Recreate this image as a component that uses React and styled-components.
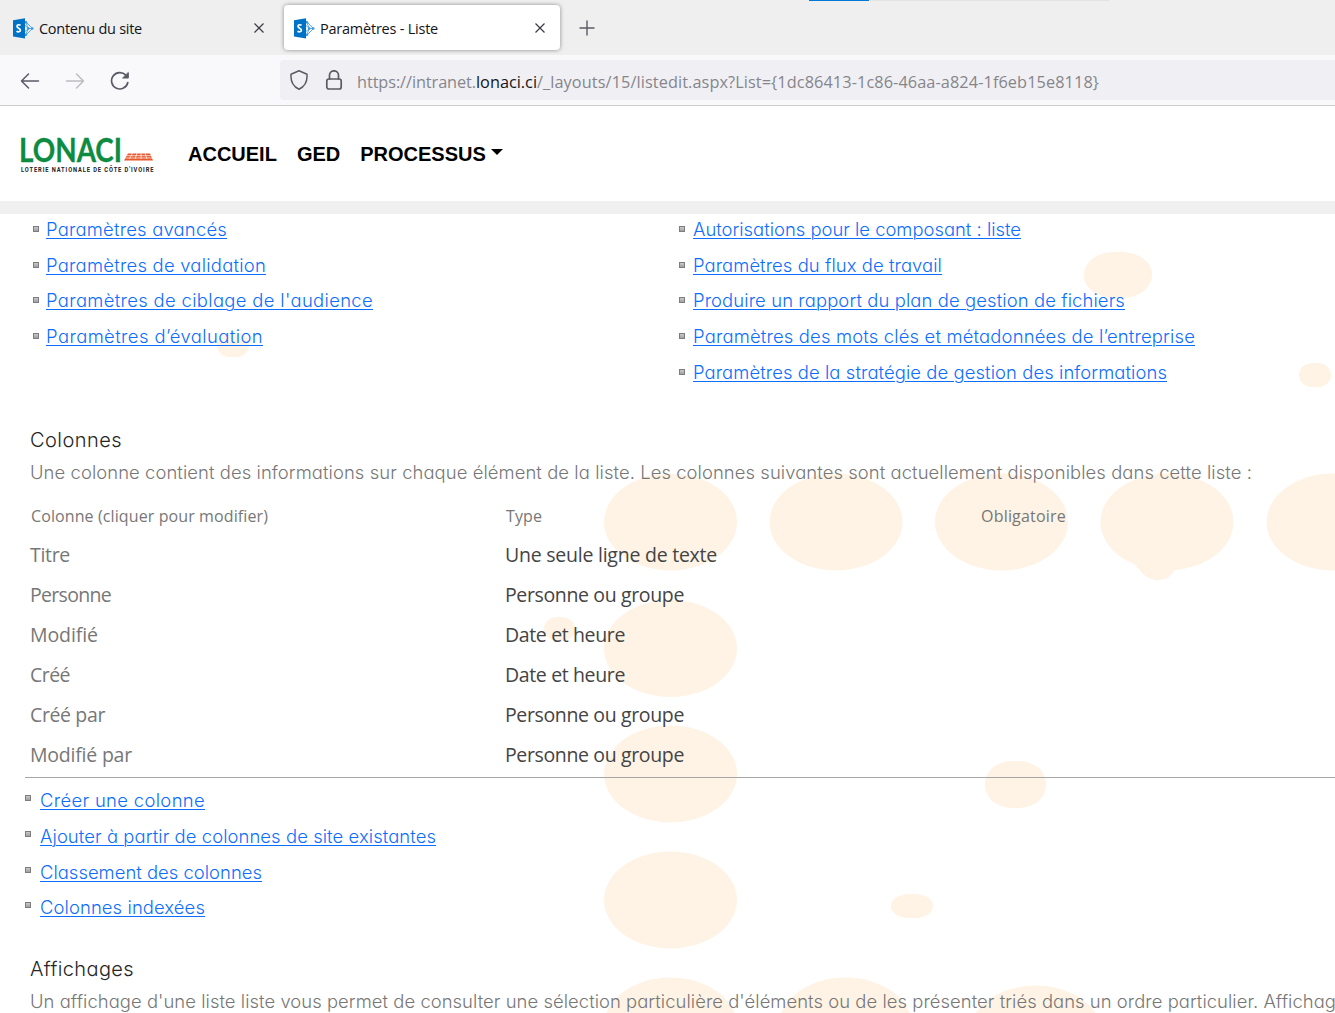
import React, { useLayoutEffect, useRef, useState } from "react";
import styled, { createGlobalStyle } from "styled-components";

const segoe = `"Open Sans", "Noto Sans", sans-serif`;
const gothic = `Inter, "Liberation Sans", sans-serif`;

const GlobalStyle = createGlobalStyle`
  *, *::before, *::after { box-sizing: border-box; }
  html, body { margin: 0; padding: 0; background: #fff; overflow: hidden; }
`;

const Page = styled.div`
  width: 1335px;
  height: 1013px;
  overflow: hidden;
  display: flex;
  flex-direction: column;
  background: #fff;
`;

/* ---------- text fitted to a column width by tracking ---------- */
const FitSpan = styled.span`
  white-space: pre;
  display: inline-block;
`;

function Fit({ w, children }) {
  const ref = useRef(null);
  const [spacing, setSpacing] = useState(0);
  useLayoutEffect(() => {
    const el = ref.current;
    const count = el.textContent.length;
    setSpacing((w - el.getBoundingClientRect().width) / count);
  }, [w]);
  return <FitSpan ref={ref} style={{ letterSpacing: `${spacing}px` }}>{children}</FitSpan>;
}

/* ---------- browser chrome ---------- */
const TabStrip = styled.div`
  position: relative;
  flex: none;
  height: 55px;
  background: #efefef;
  display: flex;
  align-items: center;
`;
const LoadingBar = styled.div`
  position: absolute;
  top: 0;
  left: 809px;
  width: 300px;
  height: 1px;
  background: linear-gradient(to right, #0078d7 60px, #e3e3e3 60px);
`;
const Tab = styled.div`
  width: 276px;
  height: 45px;
  margin-left: ${(p) => (p.$active ? 8 : 0)}px;
  padding: 1px ${(p) => (p.$active ? 15 : 12)}px 0 ${(p) => (p.$active ? 10 : 13)}px;
  border-radius: 4px;
  background: ${(p) => (p.$active ? "#fff" : "transparent")};
  box-shadow: ${(p) => (p.$active ? "0 0 4px rgba(0,0,0,.42)" : "none")};
  display: flex;
  align-items: center;
  font: 14.5px/20px ${segoe};
  color: #15141a;
`;
const TabTitle = styled.div`
  flex: 1;
  margin-left: 5px;
  padding-top: 1px;
`;
const NewTab = styled.div`
  margin-left: 19px;
  display: flex;
`;
const Toolbar = styled.div`
  flex: none;
  height: 51px;
  background: #f9f9fb;
  border-bottom: 1px solid #ccccce;
  display: flex;
  align-items: center;
  padding-left: 20px;
`;
const NavButtons = styled.div`
  width: 260px;
  padding-top: 1px;
  display: flex;
  gap: 25px;
`;
const UrlBar = styled.div`
  flex: 1;
  height: 40px;
  padding-left: 9px;
  background: #f0f0f4;
  border-radius: 4px 0 0 4px;
  display: flex;
  align-items: center;
  font: 16.3px/24px ${segoe};
  color: #86858b;
`;
const UrlIcons = styled.div`
  width: 68px;
  display: flex;
  gap: 15px;
`;
const UrlText = styled.div`
  padding-top: 4px;
`;
const Host = styled.span`
  color: #15141a;
`;

/* ---------- site header ---------- */
const Header = styled.header`
  flex: none;
  height: 108px;
  border-bottom: 13px solid #f0f0f0;
  display: flex;
  align-items: center;
  padding-left: 20px;
`;
const Menu = styled.nav`
  display: flex;
  gap: 20px;
  margin-left: 33px;
  font: bold 20px/24px "Liberation Sans", Arial, sans-serif;
  color: #000;
`;
const MenuItem = styled.div`
  display: flex;
  align-items: center;
`;
const Caret = styled.span`
  margin: -4px 0 0 5px;
  border: 6px solid transparent;
  border-top-color: #000;
  border-bottom: 0;
`;

/* ---------- content ---------- */
const Content = styled.main`
  position: relative;
  flex: 1;
  min-height: 0;
  overflow: hidden;
`;
const Dots = styled.svg`
  position: absolute;
  inset: 0;
  fill: #fef3e4;
`;
const Body = styled.div`
  position: relative;
  width: 1400px;
`;
const Settings = styled.div`
  display: grid;
  grid-template-columns: 646px 1fr;
  padding: 1px 0 0 33px;
  height: 212px;
`;
const LinkList = styled.ul`
  list-style: none;
  margin: 0;
  padding: 0;
  display: flex;
  flex-direction: column;
`;
const LinkItem = styled.li`
  height: 35.7px;
  display: flex;
  align-items: flex-start;
  gap: ${(p) => p.$gap}px;
  &::before {
    content: "";
    flex: none;
    width: 6px;
    height: 6px;
    margin-top: ${(p) => p.$bullet}px;
    border: 1px solid #7d7d7d;
    background: linear-gradient(#c9c9c9, #a0a0a0);
  }
`;
const Link = styled.a`
  font: 300 18.4px/28px ${gothic};
  font-feature-settings: "cv11", "calt" 0;
  color: #0d6efd;
  & > span {
    text-decoration: underline;
    text-decoration-thickness: 1px;
    text-underline-offset: 2px;
  }
`;
const Heading = styled.h3`
  margin: 0 0 0 30px;
  height: 32px;
  font: 300 20px/28px ${gothic};
  font-feature-settings: "cv11", "calt" 0;
  color: #262626;
`;
const Description = styled.p`
  margin: 0 0 0 30px;
  height: 30px;
  font: 300 18.4px/28px ${gothic};
  font-feature-settings: "cv11", "calt" 0;
  color: #777;
  white-space: nowrap;
`;
const Table = styled.div`
  margin: 11px 0 0 25px;
  height: 279px;
  border-bottom: 1px solid #a6a6a6;
`;
const Row = styled.div`
  display: grid;
  grid-template-columns: 475px 475px 1fr;
  align-items: center;
  height: ${(p) => (p.$head ? 34 : 40)}px;
  margin-bottom: ${(p) => (p.$head ? 2 : 0)}px;
  padding-left: ${(p) => (p.$head ? 6 : 5)}px;
  font: ${(p) => (p.$head ? 16 : 19.5)}px/26px ${segoe};
`;
const Cell = styled.div`
  color: ${(p) => (p.$dark ? "#444" : "#777")};
`;
const Actions = styled.div`
  padding: 8.25px 0 0 25px;
  height: 177px;
`;

const BigDots = [
  [670.5, 522], [836, 522], [1001.5, 522], [1167, 522], [1333, 522],
  [670.5, 648.5], [670.5, 774], [670.5, 900], [670.5, 1026], [845.5, 1026], [1035.5, 1034],
];
const SmallDots = [
  [1084, 252, 68, 46], [1299, 363, 32, 24], [217, 333, 32, 24], [544, 617, 31, 24],
  [985, 761, 61, 47], [891, 894, 42, 24],
];

function Backdrop() {
  return (
    <Dots width="1335" height="799" viewBox="0 214 1335 799">
      {BigDots.map(([x, y]) => <ellipse key={`${x}-${y}`} cx={x} cy={y} rx="66.5" ry="48.5" />)}
      {SmallDots.map(([x, y, w, h]) => (
        <rect key={`${x}-${y}`} x={x} y={y} width={w} height={h} rx={w * 0.44} ry={h * 0.48} />
      ))}
      <path d="M1133 562C1140 570 1145 580 1158 580C1167 580 1171 576 1175 569Z" />
    </Dots>
  );
}

function SharePointIcon() {
  return (
    <svg width="21" height="21" viewBox="0 0 21 21">
      <path d="M12 3L19.500 10.500L12 18M12 3L15.500 10.500L12 18M12 7.500L15.500 10.500L12 13.500M15.500 10.500H19.500" fill="none" stroke="#5aa9e2" strokeWidth="1" />
      <circle cx="19.300" cy="10.500" r="1.200" fill="#3c97dc" />
      <circle cx="15.300" cy="10.500" r="1.300" fill="#3c97dc" />
      <circle cx="13" cy="4.300" r="1.200" fill="#3c97dc" />
      <circle cx="13" cy="16.700" r="1.200" fill="#3c97dc" />
      <path d="M0 2.200L12 .2V20.500L0 18.400Z" fill="#0072c6" />
      <path d="M7.600 7.300C6 6.400 4 6.600 4 8.300C4 10.400 7.400 9.900 7.400 12.200C7.400 14 5 14.200 3.500 13.200" fill="none" stroke="#fff" strokeWidth="1.700" />
    </svg>
  );
}

const Glyph = ({ size = 20, color = "#5b5b66", width = 1.5, children }) => (
  <svg width={size} height={size} viewBox="0 0 20 20" fill="none" stroke={color} strokeWidth={width} strokeLinecap="round" strokeLinejoin="round">
    {children}
  </svg>
);

const CloseIcon = () => (
  <svg width="10" height="10" viewBox="0 0 10 10" stroke="#3a3944" strokeWidth="1.2">
    <path d="M.5 .5L9.500 9.500M9.500 .5L.5 9.500" />
  </svg>
);

function Logo() {
  return (
    <svg width="135" height="56" viewBox="0 -8 135 56">
      <text x="-1" y="27.500" fontFamily="Lato, sans-serif" fontWeight="700" fontSize="33" fill="#0c8b41" stroke="#0c8b41" strokeWidth=".3" textLength="103" lengthAdjust="spacingAndGlyphs">LONACI</text>
      <g transform="translate(1 37.500) scale(.72 1)">
        <text x="0" y="0" fontFamily="Roboto, sans-serif" fontWeight="700" fontSize="8" fill="#222" textLength="184" lengthAdjust="spacing">
          LOTERIE NATIONALE DE CÔTE D'IVOIRE
        </text>
      </g>
      <path d="M108 19.500H130L133 26.500H104Z" fill="#e8562a" />
      <path d="M107 21.700H132M105.500 24H133M112.500 19L109.500 25M117 19L115 25M121 19V25M125 19L127 25" stroke="#fff" strokeWidth=".7" />
    </svg>
  );
}

const leftLinks = [
  ["Paramètres avancés", 181], ["Paramètres de validation", 220],
  ["Paramètres de ciblage de l'audience", 327], ["Paramètres d’évaluation", 217],
];
const rightLinks = [
  ["Autorisations pour le composant : liste", 328], ["Paramètres du flux de travail", 249],
  ["Produire un rapport du plan de gestion de fichiers", 432],
  ["Paramètres des mots clés et métadonnées de l’entreprise", 502],
  ["Paramètres de la stratégie de gestion des informations", 474],
];
const actionLinks = [
  ["Créer une colonne", 165], ["Ajouter à partir de colonnes de site existantes", 396],
  ["Classement des colonnes", 222], ["Colonnes indexées", 165],
];
const text = ["Une seule ligne de texte", 212];
const group = ["Personne ou groupe", 179];
const date = ["Date et heure", 120];
const rows = [
  ["Titre", 40, text], ["Personne", 81, group], ["Modifié", 68, date],
  ["Créé", 40, date], ["Créé par", 75, group], ["Modifié par", 102, group],
];

function Links({ items, gap = 7, bullet = 11 }) {
  return (
    <LinkList>
      {items.map(([label, w]) => (
        <LinkItem key={label} $gap={gap} $bullet={bullet}>
          <Link><Fit w={w}>{label}</Fit></Link>
        </LinkItem>
      ))}
    </LinkList>
  );
}

export default function App() {
  return (
    <Page>
      <GlobalStyle />
      <TabStrip>
        <LoadingBar />
        <Tab>
          <SharePointIcon />
          <TabTitle><Fit w={103}>Contenu du site</Fit></TabTitle>
          <CloseIcon />
        </Tab>
        <Tab $active>
          <SharePointIcon />
          <TabTitle><Fit w={118}>Paramètres - Liste</Fit></TabTitle>
          <CloseIcon />
        </Tab>
        <NewTab>
          <svg width="16" height="16" viewBox="0 0 16 16" stroke="#5b5b66" strokeWidth="1.4"><path d="M8 .5V15.500M.5 8H15.500" /></svg>
        </NewTab>
      </TabStrip>
      <Toolbar>
        <NavButtons>
          <Glyph><path d="M18.500 10H1.700M8.500 3L1.500 10L8.500 17" /></Glyph>
          <Glyph color="#bdbdc2"><path d="M1.500 10H18.300M11.500 3L18.500 10L11.500 17" /></Glyph>
          <Glyph width={1.7}>
            <path d="M17.800 11.500A8.200 8.200 0 1 1 15.800 4.200" />
            <path d="M18.300 1.800V7H13Z" fill="#5b5b66" strokeWidth="1" />
          </Glyph>
        </NavButtons>
        <UrlBar>
          <UrlIcons>
            <Glyph><path d="M10 .8L18 4.200C18.500 11 16 16.500 10 19.200C4 16.500 1.500 11 2 4.200Z" /></Glyph>
            <Glyph width={1.7}>
              <rect x="2.800" y="9" width="14.400" height="10" rx="2" />
              <path d="M5.500 9V5.300A4.500 4.500 0 0 1 14.500 5.300V9" />
            </Glyph>
          </UrlIcons>
          <UrlText>
            <Fit w={119}>https://intranet.</Fit>
            <Host><Fit w={61}>lonaci.ci</Fit></Host>
            <Fit w={562}>{"/_layouts/15/listedit.aspx?List={1dc86413-1c86-46aa-a824-1f6eb15e8118}"}</Fit>
          </UrlText>
        </UrlBar>
      </Toolbar>
      <Header>
        <Logo />
        <Menu>
          <MenuItem>ACCUEIL</MenuItem>
          <MenuItem>GED</MenuItem>
          <MenuItem>PROCESSUS<Caret /></MenuItem>
        </Menu>
      </Header>
      <Content>
        <Backdrop />
        <Body>
          <Settings>
            <Links items={leftLinks} />
            <Links items={rightLinks} gap={8} />
          </Settings>
          <Heading><Fit w={92}>Colonnes</Fit></Heading>
          <Description>
            <Fit w={1222}>Une colonne contient des informations sur chaque élément de la liste. Les colonnes suivantes sont actuellement disponibles dans cette liste :</Fit>
          </Description>
          <Table>
            <Row $head>
              <Cell><Fit w={237}>Colonne (cliquer pour modifier)</Fit></Cell>
              <Cell><Fit w={36}>Type</Fit></Cell>
              <Cell><Fit w={85}>Obligatoire</Fit></Cell>
            </Row>
            {rows.map(([name, w, [type, tw]]) => (
              <Row key={name}>
                <Cell><Fit w={w}>{name}</Fit></Cell>
                <Cell $dark><Fit w={tw}>{type}</Fit></Cell>
              </Row>
            ))}
          </Table>
          <Actions>
            <Links items={actionLinks} gap={9} bullet={9} />
          </Actions>
          <Heading><Fit w={104}>Affichages</Fit></Heading>
          <Description>
            <Fit w={1306}>Un affichage d'une liste liste vous permet de consulter une sélection particulière d'éléments ou de les présenter triés dans un ordre particulier. Affichag</Fit>
          </Description>
        </Body>
      </Content>
    </Page>
  );
}
